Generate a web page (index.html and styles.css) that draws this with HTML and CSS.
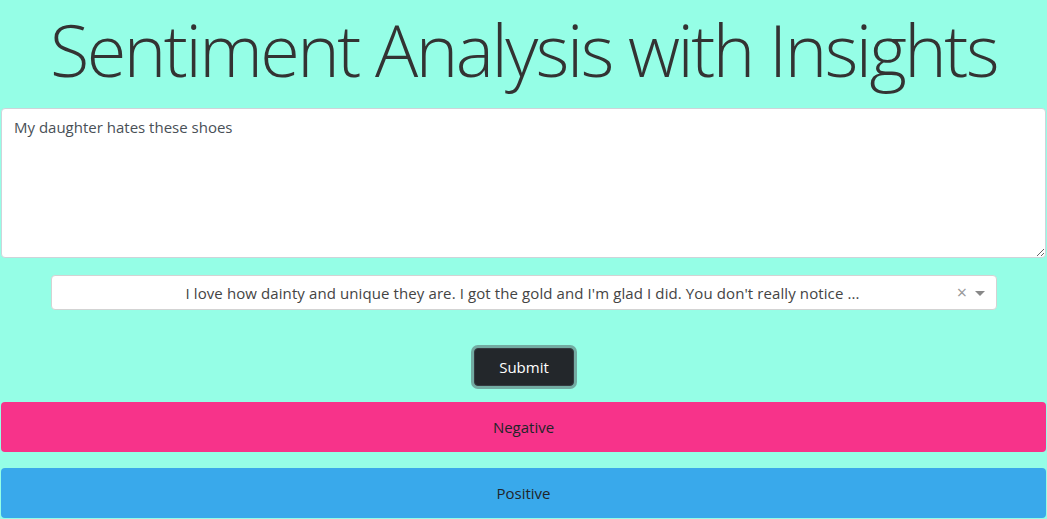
FILE: index.html
```html
<!DOCTYPE html>
<html lang="en">
<head>
<meta charset="utf-8">
<title>Sentiment Analysis with Insights</title>
<link rel="stylesheet" href="styles.css">
</head>
<body>
<div class="page">
  <h1 class="title">Sentiment Analysis with Insights</h1>
  <textarea class="review">My daughter hates these shoes</textarea>
  <div class="select-wrap">
    <div class="select">
      <span class="select-text">I love how dainty and unique they are. I got the gold and I'm glad I did. You don't really notice ...</span>
      <span class="select-clear">×</span>
      <span class="select-arrow"></span>
    </div>
  </div>
  <div class="actions">
    <button class="submit" type="button">Submit</button>
  </div>
  <div class="result negative">Negative</div>
  <div class="result positive">Positive</div>
</div>
</body>
</html>
```
FILE: styles.css
```css
* { box-sizing: border-box; }
html, body { margin: 0; padding: 0; }
body {
  background: #95fee6;
  font-family: "Open Sans", "Noto Sans", sans-serif;
  font-size: 16px;
  color: #212529;
}
.page {
  padding: 0 1px;
  display: flex;
  flex-direction: column;
}
.title {
  margin: 0;
  height: 108px;
  padding: 0 0 10px;
  text-align: center;
  font-weight: 300;
  font-size: 72px;
  line-height: 98px;
  color: #333333;
  letter-spacing: -2.5px;
}
.review {
  display: block;
  width: 100%;
  height: 150px;
  padding: 6px 12px;
  border: 1px solid #ced4da;
  border-radius: 4px;
  background: #fff;
  font-family: inherit;
  font-size: 15px;
  line-height: 24px;
  color: #495057;
  resize: vertical;
}
.select-wrap {
  padding: 17px 49px 0 50px;
}
.select {
  position: relative;
  height: 35px;
  background: #fff;
  border: 1px solid #d3d3d3;
  border-radius: 4px;
  display: flex;
  align-items: center;
  justify-content: center;
  padding: 0 23px 0 20px;
}
.select-text {
  font-size: 15px;
  color: #444;
  white-space: nowrap;
  letter-spacing: 0.1px;
}
.select-clear {
  position: absolute;
  right: 29px;
  top: 6px;
  font-size: 18px;
  line-height: 20px;
  color: #999;
}
.select-arrow {
  position: absolute;
  right: 11px;
  top: 15px;
  width: 0;
  height: 0;
  border-left: 5px solid transparent;
  border-right: 5px solid transparent;
  border-top: 5px solid #888;
}
.actions {
  display: flex;
  justify-content: center;
  padding: 38px 0 16px 1px;
}
.submit {
  width: 100px;
  height: 38px;
  border: 1px solid #343a40;
  border-radius: 4px;
  background: #23272b;
  color: #fff;
  font-family: inherit;
  font-size: 15px;
  box-shadow: 0 0 0 3px rgba(82, 88, 93, 0.5);
}
.result {
  height: 50px;
  border-radius: 4px;
  display: flex;
  align-items: center;
  justify-content: center;
  font-size: 15px;
  color: #212529;
}
.negative {
  background: #f7338a;
  margin-bottom: 16px;
}
.positive {
  background: #39a9eb;
}
```
